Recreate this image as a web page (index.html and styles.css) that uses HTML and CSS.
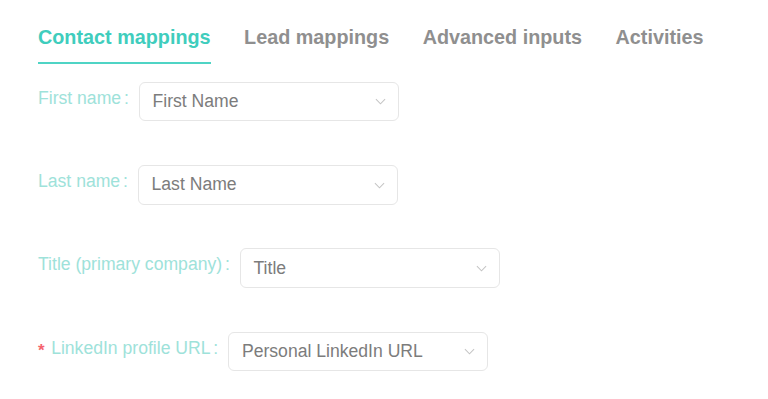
FILE: index.html
```html
<!DOCTYPE html>
<html lang="en">
<head>
<meta charset="utf-8">
<title>Mappings</title>
<link rel="stylesheet" href="styles.css">
</head>
<body>
<div class="page">
  <nav class="tabs">
    <span class="tab active">Contact mappings</span>
    <span class="tab">Lead mappings</span>
    <span class="tab">Advanced inputs</span>
    <span class="tab">Activities</span>
  </nav>
  <form class="form">
    <div class="row">
      <label class="label">First name</label>
      <div class="select"><span class="value">First Name</span><svg class="chev" viewBox="0 0 12 7"><path d="M1 1l5 5 5-5"/></svg></div>
    </div>
    <div class="row">
      <label class="label">Last name</label>
      <div class="select"><span class="value">Last Name</span><svg class="chev" viewBox="0 0 12 7"><path d="M1 1l5 5 5-5"/></svg></div>
    </div>
    <div class="row">
      <label class="label">Title (primary company)</label>
      <div class="select"><span class="value">Title</span><svg class="chev" viewBox="0 0 12 7"><path d="M1 1l5 5 5-5"/></svg></div>
    </div>
    <div class="row">
      <label class="label required">LinkedIn profile URL</label>
      <div class="select"><span class="value">Personal LinkedIn URL</span><svg class="chev" viewBox="0 0 12 7"><path d="M1 1l5 5 5-5"/></svg></div>
    </div>
  </form>
</div>
</body>
</html>
```

FILE: styles.css
```css
html, body {
  margin: 0;
  padding: 0;
  background: #ffffff;
}

.page {
  padding-left: 38px;
  font-family: "Liberation Sans", Arial, sans-serif;
}

.tabs {
  display: flex;
  gap: 33.5px;
  padding-top: 25px;
}

.tab {
  font-size: 19.8px;
  font-weight: bold;
  line-height: 24px;
  color: #8f8f8f;
  padding-bottom: 13px;
  border-bottom: 2px solid transparent;
}

.tab.active {
  color: #3fcdbd;
  border-bottom-color: #4fd4c5;
}

.form {
  padding-top: 17.7px;
}

.row {
  display: flex;
  align-items: flex-start;
  margin-bottom: 43.7px;
}

.label {
  font-size: 17.6px;
  line-height: 31.4px;
  height: 31.4px;
  padding-top: 1px;
  color: #9ee2da;
  white-space: nowrap;
}

.label::after {
  content: ":";
  margin: 0 10.2px 0 2.8px;
}

.label.required::before {
  content: "*";
  color: #f5646e;
  font-size: 17px;
  font-weight: bold;
  margin-right: 6.5px;
  position: relative;
  top: 2px;
}

.select {
  box-sizing: border-box;
  width: 260px;
  height: 39.6px;
  border: 1px solid #e6e6e6;
  border-radius: 6px;
  display: flex;
  align-items: center;
  justify-content: space-between;
  padding: 0 12px 1px 12.5px;
  background: #fff;
}

.value {
  font-size: 17.6px;
  color: #7c7c7c;
  line-height: 20px;
}

.chev {
  width: 11px;
  height: 7px;
  fill: none;
  stroke: #c4c4c4;
  stroke-width: 1.1;
  margin-top: 2px;
}
```
